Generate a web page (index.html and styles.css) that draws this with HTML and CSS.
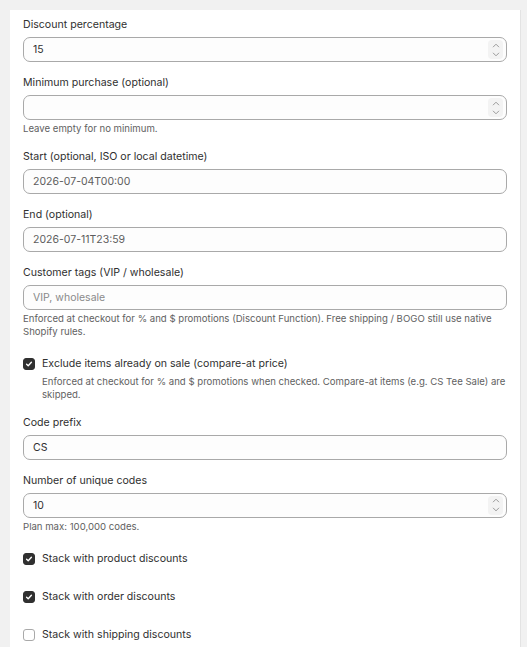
FILE: index.html
```html
<!DOCTYPE html>
<html lang="en">
<head>
    <meta charset="UTF-8">
    <meta name="viewport" content="width=device-width, initial-scale=1.0">
    <title>Discount codes</title>
    <link rel="stylesheet" href="styles.css">
</head>
<body>

    <!-- Formulario do desconto -->
    <form class="card">

        <div class="field">
            <label class="label" for="pct">Discount percentage</label>
            <div class="text-field">
                <input id="pct" type="text" value="15">
                <span class="spinner">
                    <svg width="8" height="5" viewBox="0 0 8 5"><path d="M1 4.2 L4 1.2 L7 4.2"/></svg>
                    <svg width="8" height="5" viewBox="0 0 8 5"><path d="M1 0.8 L4 3.8 L7 0.8"/></svg>
                </span>
            </div>
        </div>

        <div class="field">
            <label class="label" for="min">Minimum purchase (optional)</label>
            <div class="text-field">
                <input id="min" type="text" value="">
                <span class="spinner">
                    <svg width="8" height="5" viewBox="0 0 8 5"><path d="M1 4.2 L4 1.2 L7 4.2"/></svg>
                    <svg width="8" height="5" viewBox="0 0 8 5"><path d="M1 0.8 L4 3.8 L7 0.8"/></svg>
                </span>
            </div>
            <p class="help">Leave empty for no minimum.</p>
        </div>

        <div class="field">
            <label class="label" for="start">Start (optional, ISO or local datetime)</label>
            <div class="text-field">
                <input id="start" class="muted" type="text" value="2026-07-04T00:00">
            </div>
        </div>

        <div class="field">
            <label class="label" for="end">End (optional)</label>
            <div class="text-field">
                <input id="end" class="muted" type="text" value="2026-07-11T23:59">
            </div>
        </div>

        <div class="field">
            <label class="label" for="tags">Customer tags (VIP / wholesale)</label>
            <div class="text-field">
                <input id="tags" type="text" placeholder="VIP, wholesale">
            </div>
            <p class="help">Enforced at checkout for % and $ promotions (Discount Function). Free shipping / BOGO still use native Shopify rules.</p>
        </div>

        <div class="check-field with-help">
            <label class="check-row">
                <span class="box checked">
                    <svg width="12" height="12" viewBox="0 0 12 12"><path d="M3.6 6.3 L5.2 7.8 L8.4 4.3"/></svg>
                </span>
                Exclude items already on sale (compare-at price)
            </label>
            <p class="help check-help">Enforced at checkout for % and $ promotions when checked. Compare-at items (e.g. CS Tee Sale) are skipped.</p>
        </div>

        <div class="field">
            <label class="label" for="prefix">Code prefix</label>
            <div class="text-field">
                <input id="prefix" type="text" value="CS">
            </div>
        </div>

        <div class="field">
            <label class="label" for="qty">Number of unique codes</label>
            <div class="text-field">
                <input id="qty" type="text" value="10">
                <span class="spinner">
                    <svg width="8" height="5" viewBox="0 0 8 5"><path d="M1 4.2 L4 1.2 L7 4.2"/></svg>
                    <svg width="8" height="5" viewBox="0 0 8 5"><path d="M1 0.8 L4 3.8 L7 0.8"/></svg>
                </span>
            </div>
            <p class="help">Plan max: 100,000 codes.</p>
        </div>

        <!-- combinacoes -->
        <div class="check-field">
            <label class="check-row">
                <span class="box checked">
                    <svg width="12" height="12" viewBox="0 0 12 12"><path d="M3.6 6.3 L5.2 7.8 L8.4 4.3"/></svg>
                </span>
                Stack with product discounts
            </label>
        </div>

        <div class="check-field">
            <label class="check-row">
                <span class="box checked">
                    <svg width="12" height="12" viewBox="0 0 12 12"><path d="M3.6 6.3 L5.2 7.8 L8.4 4.3"/></svg>
                </span>
                Stack with order discounts
            </label>
        </div>

        <div class="check-field">
            <label class="check-row">
                <span class="box"></span>
                Stack with shipping discounts
            </label>
        </div>

    </form>
</body>
</html>
```

FILE: styles.css
```css
/* ---------- BASE ---------- */
body {
    margin:0;
    background:#f1f1f1;
    font-family:Inter, "Noto Sans", sans-serif;
    color:#303030;
}

/* ---------- CARD ---------- */
.card {
    background:#fff;
    margin:10px 7px 0 10px;
    padding:7px 13px 20px;
    box-shadow:1px 0 0 #e3e3e3;
    display:flex;
    flex-direction:column;
    gap:13px;
}

/* ---------- CAMPOS ---------- */
.field {
    display:flex;
    flex-direction:column;
}

.label {
    font-size:10.6px;
    line-height:16px;
    margin-bottom:4px;
}

.text-field {
    display:flex;
    align-items:center;
    height:25px;
    box-sizing:border-box;
    border:1px solid #a9a9a9;
    border-radius:7px;
    background:#fdfdfd;
    padding:0 3px 0 9px;
}

.text-field input {
    flex:1;
    min-width:0;
    border:none;
    outline:none;
    background:transparent;
    padding:0;
    font-family:inherit;
    font-size:10.5px;
    color:#303030;
}

.text-field input.muted { color:#5c5c5c; }
.text-field input::placeholder { color:#8a8a8a; }

/* setinhas do campo numerico */
.spinner {
    width:15px;
    height:19px;
    border-radius:4px;
    background:#f3f3f3;
    display:flex;
    flex-direction:column;
    align-items:center;
    justify-content:center;
    gap:4px;
}

.spinner svg path {
    fill:none;
    stroke:#9a9a9a;
    stroke-width:1;
}

.help {
    margin:2px 0 0;
    font-size:9.6px;
    line-height:13.6px;
    color:#616161;
}

/* ---------- CHECKBOX ---------- */
.check-field {
    padding:4px 0 5px;
}

.check-field.with-help { padding-bottom:0; }

.check-row {
    display:flex;
    align-items:center;
    gap:7px;
    font-size:10.6px;
    line-height:16px;
}

.box {
    width:12px;
    height:12px;
    box-sizing:border-box;
    border:1px solid #a9a9a9;
    border-radius:3px;
    background:#fff;
    flex-shrink:0;
}

.box.checked {
    background:#303030;
    border-color:#303030;
}

.box svg {
    display:block;
    margin:-1px;
}

.box svg path {
    fill:none;
    stroke:#fff;
    stroke-width:1.4;
    stroke-linecap:round;
    stroke-linejoin:round;
}

.check-help {
    margin:3px 0 0 19px;
}
```
